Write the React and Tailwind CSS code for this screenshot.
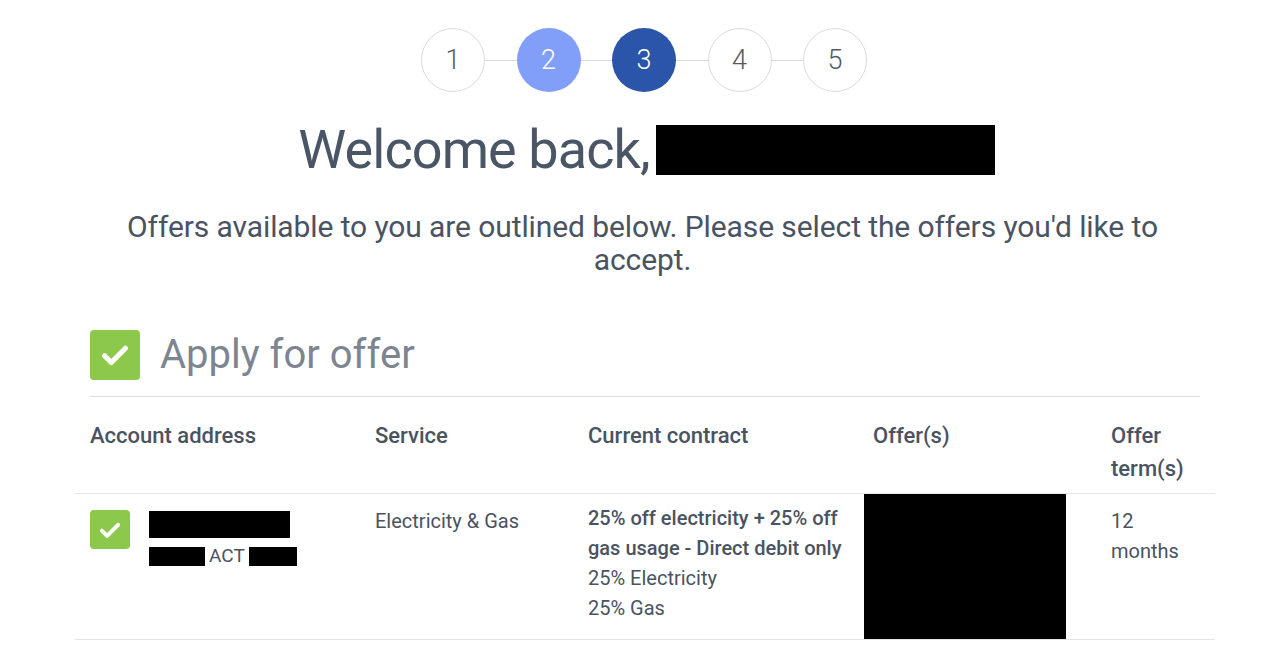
const steps = [1, 2, 3, 4, 5];

function Check({ size }) {
  return (
    <svg width={size} height={size} viewBox="0 0 24 24" fill="none">
      <path d="M5 12.5l4.5 4.5L19 7.5" stroke="white" strokeWidth="3.4" strokeLinecap="round" strokeLinejoin="round" />
    </svg>
  );
}

export default function App() {
  return (
    <div className="min-h-screen bg-white text-[#4a5361]" style={{ fontFamily: "Roboto, 'Liberation Sans', sans-serif" }}>
      <div className="flex justify-center pt-[28px]">
        <div className="relative flex gap-[31.5px] ml-[3px]">
          <div className="absolute left-[20px] right-[20px] top-[32px] h-px bg-[#dcdcdc]" />
          {steps.map((n) => (
            <div
              key={n}
              className={`relative w-[64px] h-[64px] rounded-full flex items-center justify-center text-[27px] font-light ${
                n === 2
                  ? "bg-[#819ff8] text-white"
                  : n === 3
                  ? "bg-[#2b55a8] text-white"
                  : "bg-white border border-[#dcdcdc] text-[#555c66]"
              }`}
            >
              {n}
            </div>
          ))}
        </div>
      </div>

      <div className="flex justify-center items-center mt-[32px] h-[52px] pl-[8px]">
        <h1 className="text-[54px] leading-none text-[#4a5566] tracking-[-0.9px]">Welcome back,</h1>
        <div className="ml-[6px] w-[339px] h-[50px] bg-black" />
      </div>

      <p className="text-center text-[30px] leading-[33px] text-[#4a5361] mt-[34px] px-[112px] tracking-[-0.1px]">
        Offers available to you are outlined below. Please select the offers you'd like to accept.
      </p>

      <div className="w-[1140px] ml-[75px] mt-[54px]">
        <div className="px-[15px]">
          <div className="flex items-center gap-[20px] pb-[16px] border-b border-[#dedede]">
            <div className="w-[50px] h-[50px] rounded-[4px] bg-[#8cc84b] flex items-center justify-center">
              <Check size={36} />
            </div>
            <div className="text-[40px] text-[#7d8590] leading-none">Apply for offer</div>
          </div>
        </div>

        <div className="grid grid-cols-[285px_213px_285px_238px_119px] text-[22px] font-medium text-[#4a5361] border-b border-[#e6e6e6] leading-[33px]">
          <div className="px-[15px] pt-[22px]">Account address</div>
          <div className="px-[15px] pt-[22px]">Service</div>
          <div className="px-[15px] pt-[22px]">Current contract</div>
          <div className="px-[15px] pt-[22px]">Offer(s)</div>
          <div className="px-[15px] pt-[22px] pb-[8px]">Offer term(s)</div>
        </div>

        <div className="grid grid-cols-[285px_213px_285px_238px_119px] text-[20px] text-[#4a5361] border-b border-[#e6e6e6]">
          <div className="px-[15px] pt-[16px] flex gap-[19px]">
            <div className="w-[40px] h-[39px] rounded-[4px] bg-[#8cc84b] flex items-center justify-center">
              <Check size={28} />
            </div>
            <div className="flex flex-col pt-[1px]">
              <div className="w-[141px] h-[27px] bg-black" />
              <div className="flex items-center mt-[9px] h-[19px]">
                <div className="w-[56px] h-[19px] bg-black" />
                <span className="mx-[4px] text-[19px]">ACT</span>
                <div className="w-[48px] h-[19px] bg-black" />
              </div>
            </div>
          </div>
          <div className="px-[15px] pt-[12px] leading-[30px]">Electricity &amp; Gas</div>
          <div className="px-[15px] pt-[9px] pb-[16px] leading-[30px]">
            <div className="font-medium">25% off electricity + 25% off gas usage - Direct debit only</div>
            <div>25% Electricity</div>
            <div>25% Gas</div>
          </div>
          <div className="pl-[6px] pr-[30px]">
            <div className="w-[202px] h-full bg-black" />
          </div>
          <div className="px-[15px] pt-[12px] leading-[30px]">
            <div>12</div>
            <div>months</div>
          </div>
        </div>
      </div>
    </div>
  );
}
